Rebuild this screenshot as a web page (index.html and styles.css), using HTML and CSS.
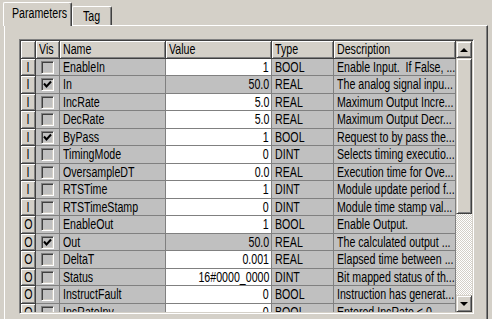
FILE: index.html
```html
<!DOCTYPE html>
<html lang="en">

<head>
    <meta charset="UTF-8">
    <title>Parameters</title>
    <link rel="stylesheet" href="styles.css">
</head>

<body>
    <div class="tabs">
        <div class="tab active"><span class="t">Parameters</span></div>
        <div class="tab"><span class="t">Tag</span></div>
    </div>
    <div class="panel">
        <div class="grid">
            <div class="rows">
                <div class="row head">
                    <div class="num"></div>
                    <div class="cell"><span class="t">Vis</span></div>
                    <div class="cell"><span class="t">Name</span></div>
                    <div class="cell"><span class="t">Value</span></div>
                    <div class="cell"><span class="t">Type</span></div>
                    <div class="cell"><span class="t">Description</span></div>
                </div>
                <div class="row">
                    <div class="num"><span class="t">I</span></div>
                    <div class="vis"><span class="box"></span></div>
                    <div class="cell"><span class="t">EnableIn</span></div>
                    <div class="cell val"><span class="t">1</span></div>
                    <div class="cell"><span class="t">BOOL</span></div>
                    <div class="cell"><span class="t">Enable Input.&nbsp; If False, ...</span></div>
                </div>
                <div class="row">
                    <div class="num"><span class="t">I</span></div>
                    <div class="vis"><span class="box"><svg width="9" height="9" viewBox="0 0 9 9"><path d="M1 3.5 L3.5 6.5 L8 1.5" fill="none" stroke="#000" stroke-width="2"/></svg></span></div>
                    <div class="cell"><span class="t">In</span></div>
                    <div class="cell val ro"><span class="t">50.0</span></div>
                    <div class="cell"><span class="t">REAL</span></div>
                    <div class="cell"><span class="t">The analog signal inpu...</span></div>
                </div>
                <div class="row">
                    <div class="num"><span class="t">I</span></div>
                    <div class="vis"><span class="box"></span></div>
                    <div class="cell"><span class="t">IncRate</span></div>
                    <div class="cell val"><span class="t">5.0</span></div>
                    <div class="cell"><span class="t">REAL</span></div>
                    <div class="cell"><span class="t">Maximum Output Incre...</span></div>
                </div>
                <div class="row">
                    <div class="num"><span class="t">I</span></div>
                    <div class="vis"><span class="box"></span></div>
                    <div class="cell"><span class="t">DecRate</span></div>
                    <div class="cell val"><span class="t">5.0</span></div>
                    <div class="cell"><span class="t">REAL</span></div>
                    <div class="cell"><span class="t">Maximum Output Decr...</span></div>
                </div>
                <div class="row">
                    <div class="num"><span class="t">I</span></div>
                    <div class="vis"><span class="box"><svg width="9" height="9" viewBox="0 0 9 9"><path d="M1 3.5 L3.5 6.5 L8 1.5" fill="none" stroke="#000" stroke-width="2"/></svg></span></div>
                    <div class="cell"><span class="t">ByPass</span></div>
                    <div class="cell val"><span class="t">1</span></div>
                    <div class="cell"><span class="t">BOOL</span></div>
                    <div class="cell"><span class="t">Request to by pass the...</span></div>
                </div>
                <div class="row">
                    <div class="num"><span class="t">I</span></div>
                    <div class="vis"><span class="box"></span></div>
                    <div class="cell"><span class="t">TimingMode</span></div>
                    <div class="cell val"><span class="t">0</span></div>
                    <div class="cell"><span class="t">DINT</span></div>
                    <div class="cell"><span class="t">Selects timing executio...</span></div>
                </div>
                <div class="row">
                    <div class="num"><span class="t">I</span></div>
                    <div class="vis"><span class="box"></span></div>
                    <div class="cell"><span class="t">OversampleDT</span></div>
                    <div class="cell val"><span class="t">0.0</span></div>
                    <div class="cell"><span class="t">REAL</span></div>
                    <div class="cell"><span class="t">Execution time for Ove...</span></div>
                </div>
                <div class="row">
                    <div class="num"><span class="t">I</span></div>
                    <div class="vis"><span class="box"></span></div>
                    <div class="cell"><span class="t">RTSTime</span></div>
                    <div class="cell val"><span class="t">1</span></div>
                    <div class="cell"><span class="t">DINT</span></div>
                    <div class="cell"><span class="t">Module update period f...</span></div>
                </div>
                <div class="row">
                    <div class="num"><span class="t">I</span></div>
                    <div class="vis"><span class="box"></span></div>
                    <div class="cell"><span class="t">RTSTimeStamp</span></div>
                    <div class="cell val"><span class="t">0</span></div>
                    <div class="cell"><span class="t">DINT</span></div>
                    <div class="cell"><span class="t">Module time stamp val...</span></div>
                </div>
                <div class="row">
                    <div class="num"><span class="t">O</span></div>
                    <div class="vis"><span class="box"></span></div>
                    <div class="cell"><span class="t">EnableOut</span></div>
                    <div class="cell val"><span class="t">1</span></div>
                    <div class="cell"><span class="t">BOOL</span></div>
                    <div class="cell"><span class="t">Enable Output.</span></div>
                </div>
                <div class="row">
                    <div class="num"><span class="t">O</span></div>
                    <div class="vis"><span class="box"><svg width="9" height="9" viewBox="0 0 9 9"><path d="M1 3.5 L3.5 6.5 L8 1.5" fill="none" stroke="#000" stroke-width="2"/></svg></span></div>
                    <div class="cell"><span class="t">Out</span></div>
                    <div class="cell val ro"><span class="t">50.0</span></div>
                    <div class="cell"><span class="t">REAL</span></div>
                    <div class="cell"><span class="t">The calculated output ...</span></div>
                </div>
                <div class="row">
                    <div class="num"><span class="t">O</span></div>
                    <div class="vis"><span class="box"></span></div>
                    <div class="cell"><span class="t">DeltaT</span></div>
                    <div class="cell val"><span class="t">0.001</span></div>
                    <div class="cell"><span class="t">REAL</span></div>
                    <div class="cell"><span class="t">Elapsed time between ...</span></div>
                </div>
                <div class="row">
                    <div class="num"><span class="t">O</span></div>
                    <div class="vis"><span class="box"></span></div>
                    <div class="cell"><span class="t">Status</span></div>
                    <div class="cell val"><span class="t">16#0000_0000</span></div>
                    <div class="cell"><span class="t">DINT</span></div>
                    <div class="cell"><span class="t">Bit mapped status of th...</span></div>
                </div>
                <div class="row">
                    <div class="num"><span class="t">O</span></div>
                    <div class="vis"><span class="box"></span></div>
                    <div class="cell"><span class="t">InstructFault</span></div>
                    <div class="cell val"><span class="t">0</span></div>
                    <div class="cell"><span class="t">BOOL</span></div>
                    <div class="cell"><span class="t">Instruction has generat...</span></div>
                </div>
                <div class="row">
                    <div class="num"><span class="t">O</span></div>
                    <div class="vis"><span class="box"></span></div>
                    <div class="cell"><span class="t">IncRateInv</span></div>
                    <div class="cell val"><span class="t">0</span></div>
                    <div class="cell"><span class="t">BOOL</span></div>
                    <div class="cell"><span class="t">Entered IncRate &lt; 0, ...</span></div>
                </div>
            </div>
            <div class="scroll">
                <div class="btn"><span class="up"></span></div>
                <div class="thumb"></div>
                <div class="track"></div>
                <div class="btn"><span class="down"></span></div>
            </div>
        </div>
    </div>
</body>

</html>
```

FILE: styles.css
```css
* {
    margin: 0;
    padding: 0;
    box-sizing: border-box;
}

body {
    width: 492px;
    height: 319px;
    overflow: hidden;
    background: #d4d0c8;
    font-family: "Liberation Sans", Arial, sans-serif;
    font-size: 14px;
    color: #000;
}

/* narrow system font look */
.t {
    display: inline-block;
    transform: scaleX(0.76);
    transform-origin: left center;
    white-space: nowrap;
}

.tabs {
    display: flex;
    align-items: flex-end;
    height: 25px;
    padding-left: 3px;
}

.tab {
    width: 40px;
    height: 19px;
    padding: 1px 0 0 10px;
    border-top: 1px solid #fff;
    border-left: 1px solid #fff;
    border-right: 1px solid #404040;
    box-shadow: inset -1px 0 #808080;
    border-radius: 2px 2px 0 0;
    background: #d4d0c8;
    line-height: 16px;
}

.tab.active {
    position: relative;
    z-index: 1;
    width: 69px;
    height: 24px;
    margin-bottom: -1px;
    padding: 2px 0 0 8px;
}

.panel {
    width: 484px;
    height: 300px;
    margin-left: 4px;
    padding: 13px 0 0 14px;
    border-top: 1px solid #fff;
    border-left: 1px solid #fff;
    border-right: 1px solid #404040;
    box-shadow: inset -1px 0 #808080;
}

.grid {
    display: flex;
    width: 455px;
    height: 275px;
    overflow: hidden;
    border: 1px solid;
    border-color: #808080 #fff #fff #808080;
    box-shadow: inset 1px 1px #404040, inset -1px -1px #d4d0c8;
    padding: 1px;
}

.rows {
    display: flex;
    flex-direction: column;
    overflow: hidden;
}

.row {
    display: grid;
    grid-template-columns: 15px 24px 106px 106px 62px 122px;
    height: 17px;
    flex: none;
    background: #c0c0c0;
}

.row:nth-child(odd) {
    height: 18px;
}

.cell {
    padding-left: 3px;
    line-height: 16px;
    white-space: nowrap;
    overflow: hidden;
    border-right: 1px solid #808080;
    border-bottom: 1px solid #808080;
}

.val {
    background: #fff;
    text-align: right;
    padding: 0 2px 0 0;
}

.val .t {
    transform-origin: right center;
}

.val.ro {
    background: #c0c0c0;
}

.num {
    background: #d4d0c8;
    text-align: center;
    line-height: 16px;
    border-right: 1px solid #404040;
    border-bottom: 1px solid #404040;
    box-shadow: inset 1px 1px #fff, inset -1px -1px #808080;
}

.num .t {
    transform-origin: center;
}

.head .cell {
    background: #d4d0c8;
    border-right: 1px solid #404040;
    border-bottom: 1px solid #404040;
    box-shadow: inset 1px 1px #fff, inset -1px -1px #808080;
}

.vis {
    display: flex;
    align-items: center;
    justify-content: center;
    border-right: 1px solid #808080;
    border-bottom: 1px solid #808080;
}

.box {
    display: flex;
    align-items: center;
    justify-content: center;
    width: 13px;
    height: 13px;
    border: 1px solid;
    border-color: #808080 #fff #fff #808080;
    box-shadow: inset 1px 1px #404040, inset -1px -1px #d4d0c8;
}

.scroll {
    display: flex;
    flex-direction: column;
    width: 16px;
    flex: none;
}

.btn,
.thumb {
    height: 17px;
    flex: none;
    display: flex;
    align-items: center;
    justify-content: center;
    background: #d4d0c8;
    border: 1px solid;
    border-color: #d4d0c8 #404040 #404040 #d4d0c8;
    box-shadow: inset 1px 1px #fff, inset -1px -1px #808080;
}

.thumb {
    height: 156px;
}

.track {
    flex: 1;
    background-image: conic-gradient(#fff 25%, #d4d0c8 0 50%, #fff 0 75%, #d4d0c8 0);
    background-size: 2px 2px;
}

.up {
    border-left: 4px solid transparent;
    border-right: 4px solid transparent;
    border-bottom: 4px solid #000;
}

.down {
    border-left: 4px solid transparent;
    border-right: 4px solid transparent;
    border-top: 4px solid #000;
}
```
